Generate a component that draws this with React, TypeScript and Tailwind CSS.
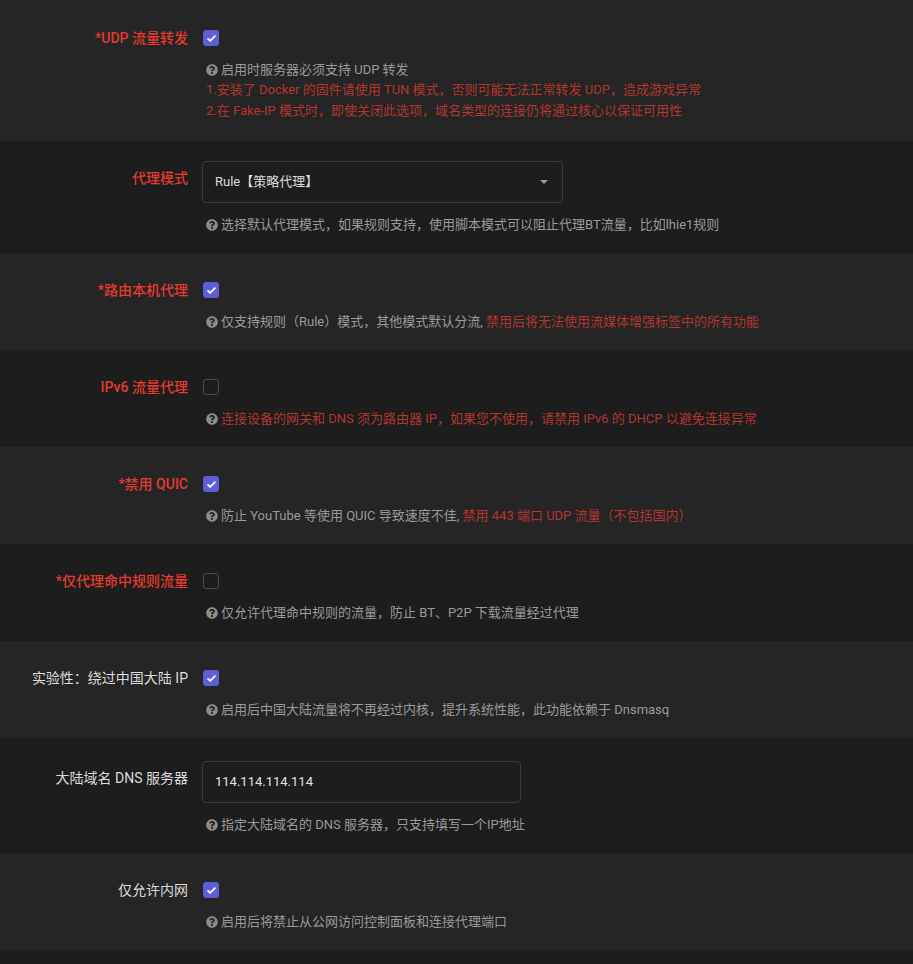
import { FaQuestionCircle } from "react-icons/fa";

type Part = { text: string; red?: boolean };

type Row = {
  label: string;
  labelRed?: boolean;
  kind: "check" | "select" | "input";
  checked?: boolean;
  value?: string;
  help: Part[];
  extra?: string[];
};

const rows: Row[] = [
  {
    label: "*UDP 流量转发",
    labelRed: true,
    kind: "check",
    checked: true,
    help: [{ text: "启用时服务器必须支持 UDP 转发" }],
    extra: [
      "1.安装了 Docker 的固件请使用 TUN 模式，否则可能无法正常转发 UDP，造成游戏异常",
      "2.在 Fake-IP 模式时，即使关闭此选项，域名类型的连接仍将通过核心以保证可用性",
    ],
  },
  {
    label: "代理模式",
    labelRed: true,
    kind: "select",
    value: "Rule【策略代理】",
    help: [{ text: "选择默认代理模式，如果规则支持，使用脚本模式可以阻止代理BT流量，比如lhie1规则" }],
  },
  {
    label: "*路由本机代理",
    labelRed: true,
    kind: "check",
    checked: true,
    help: [
      { text: "仅支持规则（Rule）模式，其他模式默认分流, " },
      { text: "禁用后将无法使用流媒体增强标签中的所有功能", red: true },
    ],
  },
  {
    label: "IPv6 流量代理",
    labelRed: true,
    kind: "check",
    checked: false,
    help: [{ text: "连接设备的网关和 DNS 须为路由器 IP，如果您不使用，请禁用 IPv6 的 DHCP 以避免连接异常", red: true }],
  },
  {
    label: "*禁用 QUIC",
    labelRed: true,
    kind: "check",
    checked: true,
    help: [
      { text: "防止 YouTube 等使用 QUIC 导致速度不佳, " },
      { text: "禁用 443 端口 UDP 流量（不包括国内）", red: true },
    ],
  },
  {
    label: "*仅代理命中规则流量",
    labelRed: true,
    kind: "check",
    checked: false,
    help: [{ text: "仅允许代理命中规则的流量，防止 BT、P2P 下载流量经过代理" }],
  },
  {
    label: "实验性：绕过中国大陆 IP",
    kind: "check",
    checked: true,
    help: [{ text: "启用后中国大陆流量将不再经过内核，提升系统性能，此功能依赖于 Dnsmasq" }],
  },
  {
    label: "大陆域名 DNS 服务器",
    kind: "input",
    value: "114.114.114.114",
    help: [{ text: "指定大陆域名的 DNS 服务器，只支持填写一个IP地址" }],
  },
  {
    label: "仅允许内网",
    kind: "check",
    checked: true,
    help: [{ text: "启用后将禁止从公网访问控制面板和连接代理端口" }],
  },
];

function Checkbox({ checked }: { checked?: boolean }) {
  if (!checked) {
    return <span className="block h-4 w-4 rounded-[3px] border border-[#4a4a4a]" />;
  }
  return (
    <span className="flex h-4 w-4 items-center justify-center rounded-[3px] bg-[#5c5fd8]">
      <svg viewBox="0 0 16 16" className="h-[11px] w-[11px]">
        <path d="M3 8.5l3 3 7-7" fill="none" stroke="#fff" strokeWidth="2.6" strokeLinecap="round" strokeLinejoin="round" />
      </svg>
    </span>
  );
}

function FormRow({ row, odd }: { row: Row; odd: boolean }) {
  const isField = row.kind !== "check";
  const pad =
    row.kind === "input"
      ? "pt-[23px] pb-[18px]"
      : row.kind === "select"
      ? "pt-5 pb-[18px]"
      : row.extra
      ? "pt-7 pb-5"
      : "pt-[27px] pb-[18px]";

  return (
    <div className={`flex ${pad} ${odd ? "bg-[#252525]" : "bg-[#1d1d1d]"}`}>
      <div
        className={`w-[188px] shrink-0 text-right text-[14px] leading-5 ${isField ? "pt-[7px]" : ""} ${
          row.labelRed ? "font-medium text-[#e23b2f]" : "text-[#dcdcdc]"
        }`}
      >
        {row.label}
      </div>
      <div className="ml-[14px] flex flex-col">
        {row.kind === "check" && (
          <div className="flex h-5 items-center pl-px">
            <Checkbox checked={row.checked} />
          </div>
        )}
        {row.kind === "select" && (
          <div className="flex h-[42px] w-[361px] items-center justify-between rounded border border-[#3b3b3b] bg-[#1d1d1d] pl-3 pr-[14px] text-[13px] text-[#dedede]">
            <span>{row.value}</span>
            <span className="h-0 w-0 border-x-[4px] border-t-[4px] border-x-transparent border-t-[#9c9c9c]" />
          </div>
        )}
        {row.kind === "input" && (
          <div className="flex h-[42px] w-[319px] items-center rounded border border-[#3b3b3b] bg-[#1d1d1d] pl-3 text-[13px] text-[#e2e2e2]">
            {row.value}
          </div>
        )}
        <div className="mt-3 pl-1 text-[13px] leading-5">
          <div className="flex h-5 items-center">
            <FaQuestionCircle className="mr-[3px] h-[12px] w-[12px] shrink-0 text-[#8c8c8c]" />
            <span>
              {row.help.map((p, i) => (
                <span key={i} className={p.red ? "text-[#b3352f]" : "text-[#9a9a9a]"}>
                  {p.text}
                </span>
              ))}
            </span>
          </div>
          {row.extra?.map((line, i) => (
            <div key={i} className="text-[#b3352f] leading-[20.5px]">
              {line}
            </div>
          ))}
        </div>
      </div>
    </div>
  );
}

export default function App() {
  return (
    <div
      className="min-h-screen w-full bg-[#1d1d1d]"
      style={{ fontFamily: 'Roboto, "Noto Sans CJK SC", sans-serif' }}
    >
      {rows.map((row, i) => (
        <FormRow key={i} row={row} odd={i % 2 === 0} />
      ))}
    </div>
  );
}
